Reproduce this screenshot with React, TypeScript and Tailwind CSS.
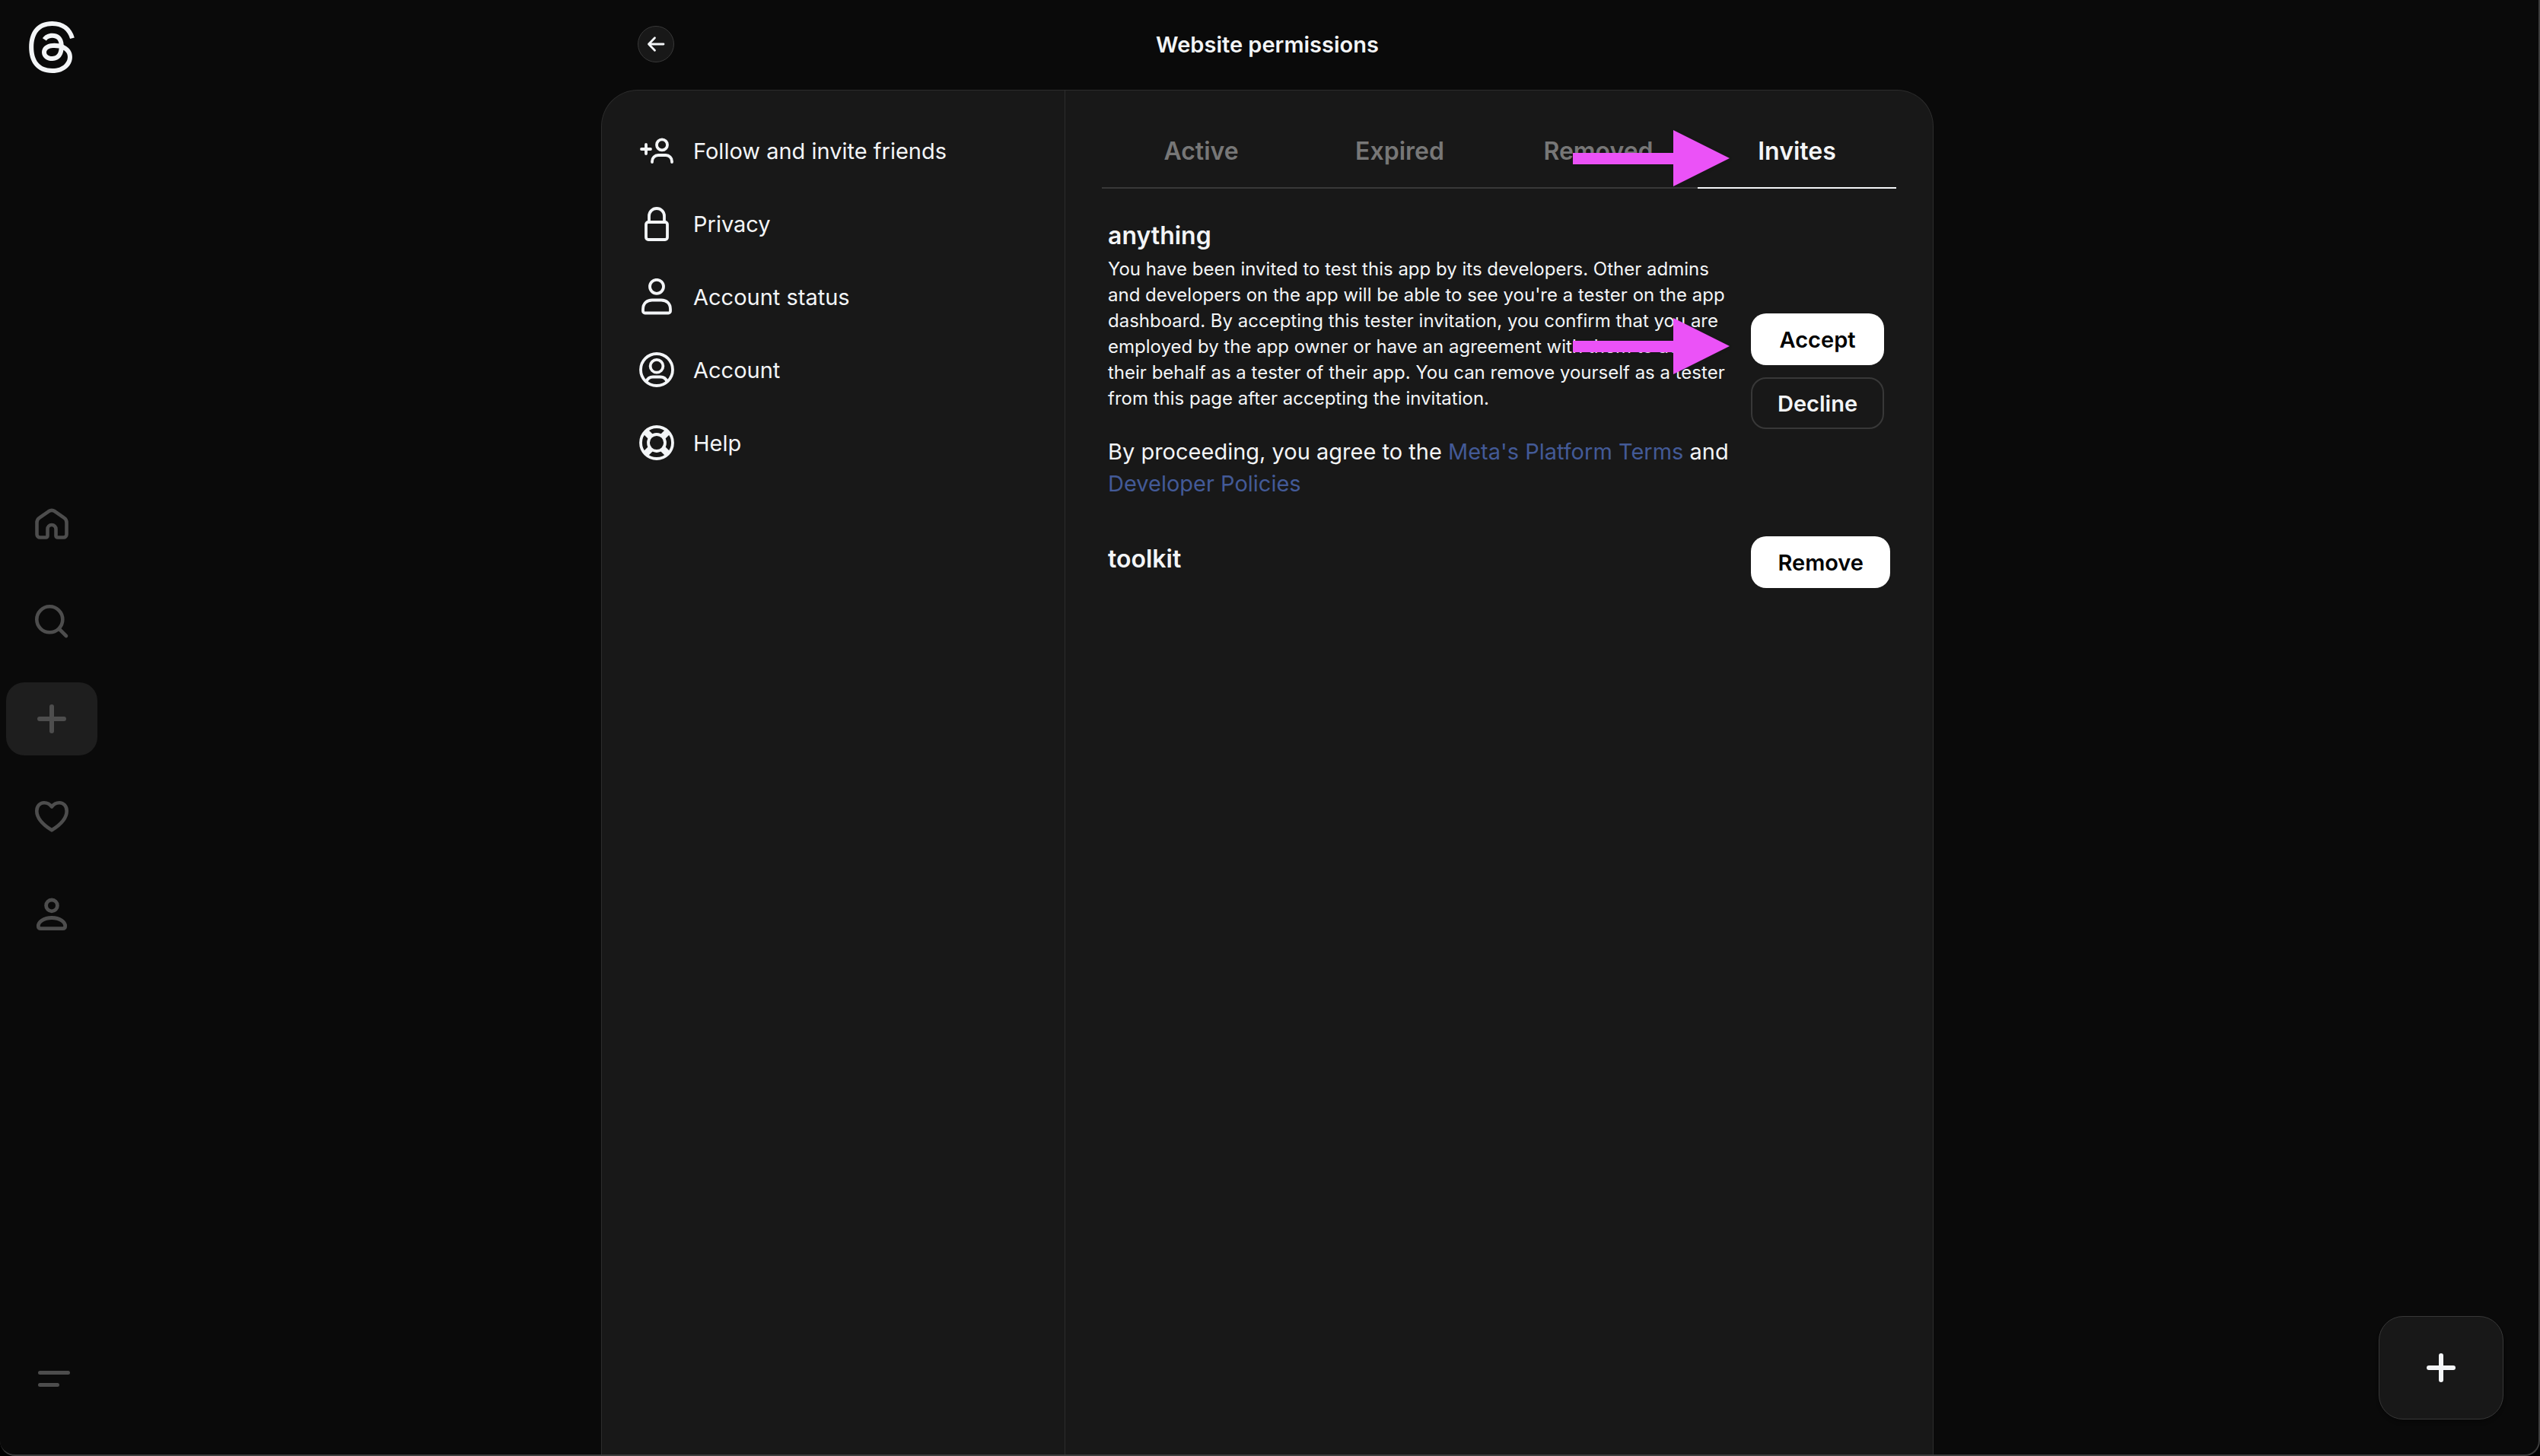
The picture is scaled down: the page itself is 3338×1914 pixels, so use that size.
import type { ReactNode } from "react";
import { SiThreads } from "react-icons/si";

function Icon({ box, stroke, className, children }: { box: number; stroke: number; className: string; children: ReactNode }) {
  return (
    <svg
      viewBox={`0 0 ${box} ${box}`}
      fill="none"
      stroke="currentColor"
      strokeWidth={stroke}
      strokeLinecap="round"
      strokeLinejoin="round"
      aria-hidden="true"
      className={className}
    >
      {children}
    </svg>
  );
}

const navItems = [
  {
    label: "Home",
    stroke: 4.6,
    art: (
      <path d="M11 43.5h7.5a2 2 0 0 0 2-2v-9a5.5 5.5 0 0 1 11 0v9a2 2 0 0 0 2 2h8a4 4 0 0 0 4-4V24c0-2.7-1.2-5-3.4-6.4L30.2 9.3c-2.6-1.7-5.8-1.7-8.4 0L9.9 17.6C7.7 19 6.5 21.3 6.5 24v15.5a4 4 0 0 0 4 4z" />
    ),
  },
  {
    label: "Search",
    stroke: 4.6,
    art: (
      <>
        <circle cx="23.3" cy="23.3" r="17" />
        <path d="M36 36l9 9" />
      </>
    ),
  },
  { label: "Create", stroke: 6, active: true, art: <path d="M26 10v32M10 26h32" /> },
  {
    label: "Notifications",
    stroke: 4.6,
    art: (
      <path d="M26 13.5C23.2 9.8 19.2 8.3 16 8.3c-5.7 0-9.7 4.5-9.7 10.7C6.3 28.500 15 37.5 26 44.300 37 37.5 45.7 28.5 45.700 19c0-6.200-4-10.700-9.700-10.700-3.200 0-7.200 1.500-10 5.200z" />
    ),
  },
  {
    label: "Profile",
    stroke: 4.8,
    art: (
      <>
        <circle cx="26" cy="15.4" r="7.4" />
        <path d="M8.3 42.3C8.3 37 15 31.5 26 31.5S43.7 37 43.7 42.3c0 2.1-1.2 3.400-3.200 3.400h-29c-2 0-3.200-1.300-3.200-3.400z" />
      </>
    ),
  },
];

const settings = [
  {
    label: "Follow and invite friends",
    art: (
      <>
        <circle cx="31" cy="16.4" r="7" />
        <path d="M18 39v-1a8 8 0 0 1 8-8h10a8 8 0 0 1 8 8v1" />
        <path d="M10 16v12M4 22h12" />
      </>
    ),
  },
  {
    label: "Privacy",
    art: (
      <>
        <rect x="10" y="22" width="28" height="23" rx="3" />
        <path d="M14 22v-8a10 10 0 0 1 20 0v8" />
      </>
    ),
  },
  {
    label: "Account status",
    art: (
      <>
        <circle cx="24" cy="10.8" r="9" />
        <path d="M6 40.5c0-7.5 5-12 12-12h12c7 0 12 4.5 12 12V43a2.5 2.5 0 0 1-2.5 2.5h-31A2.5 2.5 0 0 1 6 43z" />
      </>
    ),
  },
  {
    label: "Account",
    art: (
      <>
        <circle cx="24" cy="24" r="21" />
        <circle cx="24" cy="19.3" r="8.4" />
        <path d="M10.5 39.5c1.5-4 4.5-6 8.500-6h10c4 0 7 2 8.500 6" />
      </>
    ),
  },
  {
    label: "Help",
    art: (
      <>
        <circle cx="24" cy="24" r="21" />
        <circle cx="24" cy="24" r="11" />
        <path strokeWidth="8.5" strokeLinecap="butt" d="M9.5 9.5L16 16M38.5 9.5L32 16M9.5 38.5L16 32M38.5 38.5L32 32" />
      </>
    ),
  },
];

const tabs = ["Active", "Expired", "Removed", "Invites"];

function Pointer({ className }: { className: string }) {
  return (
    <svg viewBox="0 0 206 74" aria-hidden="true" className={`pointer-events-none absolute right-[267px] w-[206px] drop-shadow-sm ${className}`}>
      <path fill="#eb52f7" d="M0 30h132V0l74 37-74 37V45H0z" />
    </svg>
  );
}

function SolidButton({ children }: { children: ReactNode }) {
  return (
    <button type="button" className="h-[68px] rounded-[20px] bg-white px-[35px] pt-0.5 font-semibold text-black">
      {children}
    </button>
  );
}

export default function App() {
  return (
    <div className="h-screen bg-black font-['Inter',sans-serif] text-[29px] leading-[42px] text-[#f3f5f7]">
      <div className="relative flex h-full overflow-hidden rounded-b-[20px] border-r-2 border-b-2 border-[#3c3c3c] bg-[#0a0a0a]">
        <aside className="flex w-[136px] shrink-0 flex-col text-[#4d4d4d]">
          <a href="#" aria-label="Threads" className="flex h-[124px] items-center justify-center text-[#f3f5f7]">
            <SiThreads className="size-[68px]" />
          </a>
          <nav className="flex flex-1 flex-col justify-center gap-8 px-2">
            {navItems.map((item) => (
              <a
                key={item.label}
                href="#"
                aria-label={item.label}
                className={`flex h-24 items-center justify-center rounded-3xl ${item.active ? "bg-[#1e1e1e]" : ""}`}
              >
                <Icon box={52} stroke={item.stroke} className="size-[52px]">
                  {item.art}
                </Icon>
              </a>
            ))}
          </nav>
          <button type="button" aria-label="More" className="flex h-[146px] justify-center pt-5">
            <Icon box={52} stroke={5} className="size-[52px]">
              <path d="M10.5 18.5h37M10.5 34.5h23" />
            </Icon>
          </button>
        </aside>

        <main className="flex flex-1 justify-center pr-[141px]">
          <div className="flex w-full max-w-[1751px] flex-col">
            <header className="grid h-[118px] shrink-0 grid-cols-[1fr_auto_1fr] items-center px-12 pb-0.5">
              <button type="button" aria-label="Back" className="flex size-12 items-center justify-center rounded-full border border-[#383838] bg-[#181818]">
                <Icon box={24} stroke={2.8} className="size-6">
                  <path d="M22 12H2.5M10.5 3.8L2.5 12l8 8.2" />
                </Icon>
              </button>
              <h1 className="pt-0.5 font-semibold">Website permissions</h1>
            </header>

            <div className="flex flex-1 rounded-t-[48px] border border-b-0 border-[#2d2d2d] bg-[#181818]">
              <nav className="w-[609px] shrink-0 border-r border-[#2d2d2d] pt-[31px]">
                {settings.map((item) => (
                  <a key={item.label} href="#" className="flex h-24 items-center gap-6 pl-12">
                    <Icon box={48} stroke={3.8} className="size-12">
                      {item.art}
                    </Icon>
                    <span className="pt-0.5">{item.label}</span>
                  </a>
                ))}
              </nav>

              <section className="relative flex-1 px-12 pt-[31px]">
                <div role="tablist" className="grid grid-cols-4">
                  {tabs.map((tab) => (
                    <button
                      key={tab}
                      type="button"
                      role="tab"
                      aria-selected={tab === "Invites"}
                      className={`h-[98px] border-b-2 pt-0.5 text-[32px] font-semibold ${
                        tab === "Invites" ? "border-[#f3f5f7]" : "border-[#383838] text-[#777777]"
                      }`}
                    >
                      {tab}
                    </button>
                  ))}
                </div>

                <div className="flex flex-col gap-10 px-2 pt-[41px]">
                  <div className="flex items-center gap-6">
                    <div className="flex-1">
                      <h2 className="text-[32px] font-semibold">anything</h2>
                      <p className="mt-[6px] text-2xl leading-[34px]">
                        You have been invited to test this app by its developers. Other admins and developers on the app will be able to
                        see you're a tester on the app dashboard. By accepting this tester invitation, you confirm that you are employed
                        by the app owner or have an agreement with them to act on their behalf as a tester of their app. You can remove
                        yourself as a tester from this page after accepting the invitation.
                      </p>
                      <p className="mt-8">
                        By proceeding, you agree to the{" "}
                        <a href="#" className="text-[#435a97]">
                          Meta's Platform Terms
                        </a>{" "}
                        and{" "}
                        <a href="#" className="text-[#435a97]">
                          Developer Policies
                        </a>
                      </p>
                    </div>
                    <div className="flex w-[183px] pt-[30px]">
                      <div className="flex flex-col gap-4">
                        <SolidButton>Accept</SolidButton>
                        <button type="button" className="h-[68px] rounded-[20px] border-2 border-[#383838] px-[33px] pt-0.5 font-semibold">
                          Decline
                        </button>
                      </div>
                    </div>
                  </div>

                  <div className="flex items-center gap-6">
                    <h2 className="flex-1 text-[32px] font-semibold">toolkit</h2>
                    <div className="pt-2">
                      <SolidButton>Remove</SolidButton>
                    </div>
                  </div>
                </div>

                <Pointer className="top-[52px]" />
                <Pointer className="top-[299px]" />
              </section>
            </div>
          </div>
        </main>

        <button
          type="button"
          aria-label="New thread"
          className="absolute right-[46px] bottom-[46px] flex h-[136px] w-[164px] items-center justify-center rounded-[32px] border border-[#383838] bg-[#181818] shadow-md"
        >
          <Icon box={52} stroke={6} className="size-[52px]">
            <path d="M26 10v32M10 26h32" />
          </Icon>
        </button>
      </div>
    </div>
  );
}
